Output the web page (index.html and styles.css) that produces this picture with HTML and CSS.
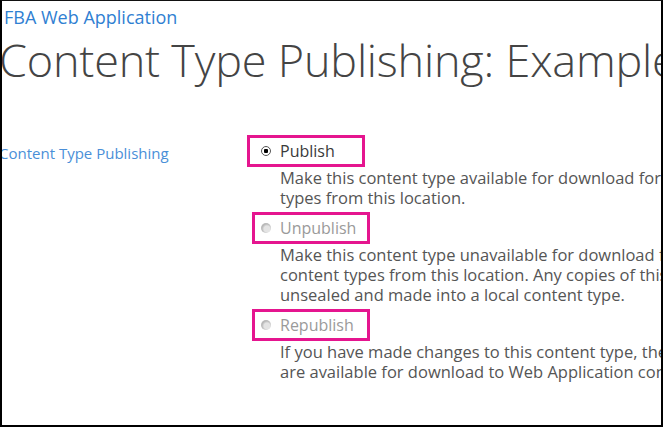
FILE: index.html
```html
<!DOCTYPE html>
<html>
<head>
<meta charset="utf-8">
<link rel="stylesheet" href="styles.css">
</head>
<body>
<div class="frame">
  <div class="site">FBA Web Application</div>
  <h1 class="title">Content Type Publishing: Example</h1>
  <div class="section">
    <div class="label">Content Type Publishing</div>
    <div class="options">
      <div class="opt">
        <div class="choice choice-first"><span class="radio radio-on"></span><span class="choice-text">Publish</span></div>
        <div class="desc">
          <span class="line">Make this content type available for download for all Site Collections that consume content</span>
          <span class="line">types from this location.</span>
        </div>
      </div>
      <div class="opt">
        <div class="choice choice-off"><span class="radio radio-off"></span><span class="choice-text">Unpublish</span></div>
        <div class="desc">
          <span class="line">Make this content type unavailable for download for all Site Collections that consume</span>
          <span class="line">content types from this location. Any copies of this content type being used in other sites will be</span>
          <span class="line">unsealed and made into a local content type.</span>
        </div>
      </div>
      <div class="opt">
        <div class="choice choice-off"><span class="radio radio-off"></span><span class="choice-text">Republish</span></div>
        <div class="desc">
          <span class="line">If you have made changes to this content type, the content type needs to be republished before the changes</span>
          <span class="line">are available for download to Web Application consuming sites.</span>
        </div>
      </div>
    </div>
  </div>
</div>
</body>
</html>
```
FILE: styles.css
```css
html, body {
  margin: 0;
  padding: 0;
  background: #fff;
}
.frame {
  width: 663px;
  height: 427px;
  box-sizing: border-box;
  border-top: 1px solid #111;
  border-left: 2px solid #000;
  border-right: 2px solid #000;
  border-bottom: 2px solid #000;
  overflow: hidden;
  font-family: "Open Sans", "Noto Sans", sans-serif;
  background: #fff;
}
.site {
  margin: 6px 0 0 2px;
  font-size: 18px;
  line-height: 20px;
  color: #2f80d2;
  white-space: nowrap;
}
.title {
  margin: 7px 0 0 -3px;
  font-weight: 300;
  font-size: 45px;
  line-height: 52px;
  color: #444;
  white-space: nowrap;
  letter-spacing: -0.2px;
}
.section {
  display: flex;
  margin-top: 49px;
}
.label {
  width: 248px;
  flex: none;
  margin-left: -3px;
  padding-top: 9px;
  font-size: 15px;
  line-height: 18px;
  color: #4a8fd8;
  white-space: nowrap;
}
.options {
  display: flex;
  flex-direction: column;
  min-width: 0;
}
.opt {
  display: flex;
  flex-direction: column;
}
.choice {
  display: flex;
  align-items: center;
  align-self: flex-start;
  box-sizing: border-box;
  width: 118px;
  height: 32px;
  border: 3px solid #e5158f;
  padding-left: 11px;
  font-size: 16px;
  color: #3a3a3a;
}
.choice-off {
  margin-left: 5px;
  padding-left: 6px;
  color: #9a9a9a;
}
.radio {
  width: 10px;
  height: 10px;
  border-radius: 50%;
  box-sizing: border-box;
  margin-right: 9px;
  flex: none;
}
.radio-on {
  border: 1px solid #555;
  background: radial-gradient(circle, #000 0 2px, #fff 2.5px);
}
.radio-off {
  background: radial-gradient(circle at 60% 60%, #e4e4e4 0 3px, #b9b9b9 5px);
}
.desc {
  display: flex;
  flex-direction: column;
  margin-left: 33px;
  margin-top: 1px;
  margin-bottom: 4px;
  font-size: 16.5px;
  line-height: 20px;
  color: #555;
}
.line {
  white-space: nowrap;
}
```
